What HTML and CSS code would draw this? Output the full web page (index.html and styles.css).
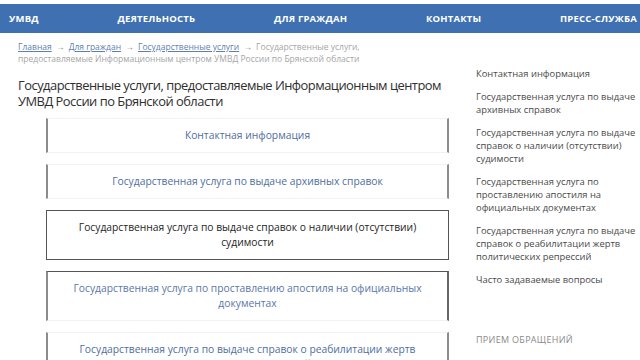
FILE: index.html
```html
<!DOCTYPE html>
<html lang="ru">
<head>
<meta charset="utf-8">
<title>Государственные услуги</title>
<link rel="stylesheet" href="styles.css">
</head>
<body>
<header class="top">
  <nav class="nav">
    <a href="#">УМВД</a>
    <a href="#">Деятельность</a>
    <a href="#">Для граждан</a>
    <a href="#">Контакты</a>
    <a href="#">Пресс-служба</a>
  </nav>
</header>
<div class="page">
  <main class="main">
    <div class="crumbs">
      <a href="#">Главная</a> <span class="arr">→</span> <a href="#">Для граждан</a> <span class="arr">→</span> <a href="#">Государственные услуги</a> <span class="arr">→</span> Государственные услуги, предоставляемые Информационным центром УМВД России по Брянской области
    </div>
    <h1 class="title">Государственные услуги, предоставляемые Информационным центром УМВД России по Брянской области</h1>
    <div class="boxes">
      <a class="box" href="#">Контактная информация</a>
      <a class="box" href="#">Государственная услуга по выдаче архивных справок</a>
      <a class="box active" href="#">Государственная услуга по выдаче справок о наличии (отсутствии) судимости</a>
      <a class="box half" href="#">Государственная услуга по проставлению апостиля на официальных документах</a>
      <a class="box" href="#">Государственная услуга по выдаче справок о реабилитации жертв политических репрессий</a>
    </div>
  </main>
  <aside class="side">
    <ul class="side-list">
      <li><a href="#">Контактная информация</a></li>
      <li><a href="#">Государственная услуга по выдаче архивных справок</a></li>
      <li><a href="#">Государственная услуга по выдаче справок о наличии (отсутствии) судимости</a></li>
      <li><a href="#">Государственная услуга по проставлению апостиля на официальных документах</a></li>
      <li><a href="#">Государственная услуга по выдаче справок о реабилитации жертв политических репрессий</a></li>
      <li><a href="#">Часто задаваемые вопросы</a></li>
    </ul>
    <div class="side-head">Прием обращений</div>
  </aside>
</div>
</body>
</html>
```
FILE: styles.css
```css
* { box-sizing: border-box; }
html, body { margin: 0; padding: 0; background: #fff; }
body {
  font-family: "Open Sans", "Noto Sans", sans-serif;
  color: #333;
  width: 640px;
  height: 360px;
  overflow: hidden;
}
a { text-decoration: none; color: inherit; }

.top { padding-top: 4px; }
.nav {
  height: 29px;
  background: #3e70b2;
  display: flex;
  justify-content: space-between;
  align-items: center;
  padding: 0 3px 0 9px;
}
.nav a {
  color: #fff;
  font-size: 9.5px;
  font-weight: 700;
  text-transform: uppercase;
  letter-spacing: 0.2px;
}

.page {
  display: flex;
  padding-left: 18px;
  gap: 26px;
}
.main { width: 432px; flex: none; }

.crumbs {
  margin-top: 8px;
  font-size: 8.5px;
  line-height: 12px;
  color: #a6a6a6;
  width: 380px;
}
.crumbs a { color: #5f7fb0; text-decoration: underline; }
.crumbs .arr {
  color: #8a8a8a;
  margin: 0 2px;
}

.title {
  margin: 12px 0 9px;
  font-size: 12.9px;
  line-height: 16px;
  font-weight: 400;
  letter-spacing: -0.5px;
  color: #2e2e2e;
}

.boxes {
  display: flex;
  flex-direction: column;
  gap: 11px;
  margin-left: 28px;
  margin-right: 1px;
}
.box {
  display: block;
  text-align: center;
  font-size: 10.3px;
  line-height: 15px;
  padding: 9px 20px;
  color: #4f6e9e;
  border-left: 2px solid #8c8c8c;
  border-right: 2px solid #8c8c8c;
  border-top: 1px solid #f2f2f2;
  border-bottom: 1px solid #f2f2f2;
}
.box.active {
  color: #1e1e1e;
  border: 1.5px solid #555;
}
.box.half {
  border-top: 1.5px solid #555;
  border-right-color: #666;
  color: #5a77a8;
}

.side { width: 170px; flex: none; padding-top: 34px; }
.side-list {
  list-style: none;
  margin: 0;
  padding: 0;
}
.side-list li {
  font-size: 9.4px;
  line-height: 13px;
  color: #4a4a4a;
  margin-bottom: 10px;
  padding-right: 6px;
}
.side-head {
  margin-top: 47px;
  font-size: 9px;
  color: #8a8a8a;
  text-transform: uppercase;
  letter-spacing: 0.3px;
}
```
